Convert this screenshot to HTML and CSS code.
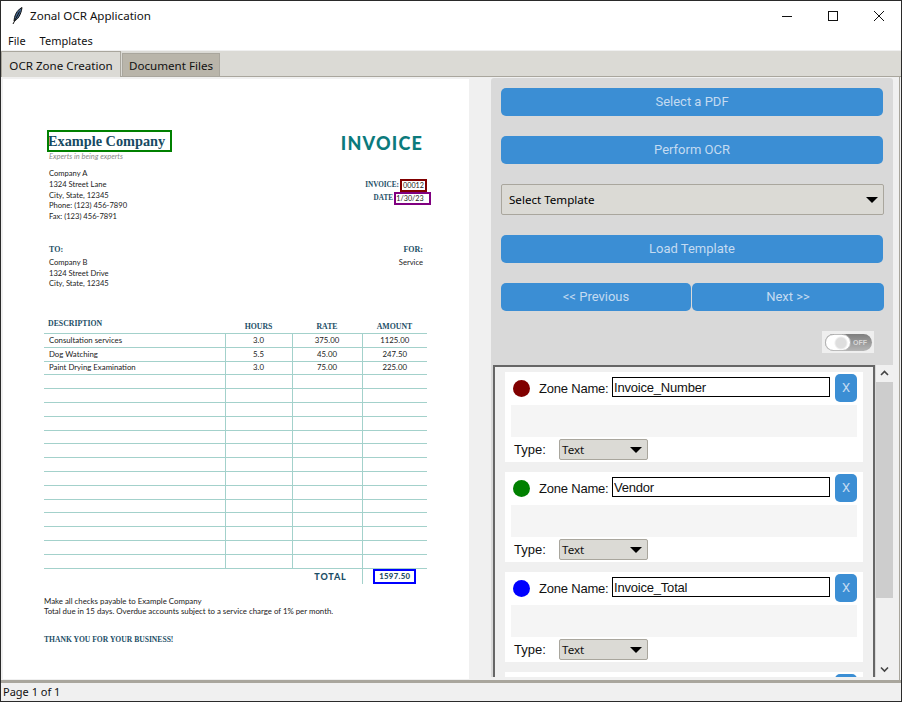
FILE: index.html
```html
<!DOCTYPE html>
<html lang="en">
<head>
    <meta charset="UTF-8">
    <title>Zonal OCR Application</title>
    <link rel="stylesheet" href="styles.css">
</head>
<body>
    <div class="window">
        <div class="titlebar">
            <svg class="app-icon" width="16" height="20" viewBox="0 0 16 20">
                <path d="M13 1.5C9.5 3 6.5 7 5.5 11.5L5 15C8.5 14 12 9 13 1.5Z" fill="#41658f" stroke="#111" stroke-width="1"/>
                <path d="M10.5 5.5L4 18" stroke="#111" stroke-width="1" fill="none"/>
            </svg>
            <span class="title">Zonal OCR Application</span>
            <div class="win-controls">
                <svg width="12" height="12" viewBox="0 0 12 12"><path d="M1 6.5H11" stroke="#111" fill="none"/></svg>
                <svg width="12" height="12" viewBox="0 0 12 12"><rect x="1.5" y="1.5" width="9" height="9" stroke="#111" fill="none"/></svg>
                <svg width="12" height="12" viewBox="0 0 12 12"><path d="M1 1L11 11M11 1L1 11" stroke="#111" fill="none"/></svg>
            </div>
        </div>

        <div class="menubar">
            <span>File</span>
            <span>Templates</span>
        </div>

        <div class="notebook">
            <div class="tabs">
                <div class="tab active">OCR Zone Creation</div>
                <div class="tab">Document Files</div>
            </div>

            <div class="tab-body">
                <div class="doc">
                    <div class="doc-head">
                        <div>
                            <div class="company">Example Company</div>
                            <div class="tagline">Experts in being experts</div>
                        </div>
                        <div class="invoice-word">INVOICE</div>
                    </div>

                    <div class="sender-row">
                        <div class="lines">
                            <div>Company A</div>
                            <div>1324 Street Lane</div>
                            <div>City, State, 12345</div>
                            <div>Phone: (123) 456-7890</div>
                            <div>Fax: (123) 456-7891</div>
                        </div>
                        <div class="meta">
                            <div class="meta-row"><b>INVOICE:</b><span class="meta-no">00012</span></div>
                            <div class="meta-row"><b>DATE</b><span class="meta-date">1/30/23</span></div>
                        </div>
                    </div>

                    <div class="bill-row">
                        <div class="lines">
                            <div class="heading">TO:</div>
                            <div>Company B</div>
                            <div>1324 Street Drive</div>
                            <div>City, State, 12345</div>
                        </div>
                        <div class="lines right">
                            <div class="heading">FOR:</div>
                            <div>Service</div>
                        </div>
                    </div>

                    <table class="items">
                        <tr class="items-head">
                            <th class="desc">DESCRIPTION</th>
                            <th class="col-hours">HOURS</th>
                            <th class="col-rate">RATE</th>
                            <th class="col-amount">AMOUNT</th>
                        </tr>
                        <tr><td>Consultation services</td><td>3.0</td><td>375.00</td><td>1125.00</td></tr>
                        <tr><td>Dog Watching</td><td>5.5</td><td>45.00</td><td>247.50</td></tr>
                        <tr><td>Paint Drying Examination</td><td>3.0</td><td>75.00</td><td>225.00</td></tr>
                        <tr><td></td><td></td><td></td><td></td></tr>
                        <tr><td></td><td></td><td></td><td></td></tr>
                        <tr><td></td><td></td><td></td><td></td></tr>
                        <tr><td></td><td></td><td></td><td></td></tr>
                        <tr><td></td><td></td><td></td><td></td></tr>
                        <tr><td></td><td></td><td></td><td></td></tr>
                        <tr><td></td><td></td><td></td><td></td></tr>
                        <tr><td></td><td></td><td></td><td></td></tr>
                        <tr><td></td><td></td><td></td><td></td></tr>
                        <tr><td></td><td></td><td></td><td></td></tr>
                        <tr><td></td><td></td><td></td><td></td></tr>
                        <tr><td></td><td></td><td></td><td></td></tr>
                        <tr><td></td><td></td><td></td><td></td></tr>
                        <tr><td></td><td></td><td></td><td></td></tr>
                        <tr class="total-row">
                            <td colspan="3">TOTAL</td>
                            <td>1597.50</td>
                        </tr>
                    </table>

                    <div class="notes">
                        <div>Make all checks payable to Example Company</div>
                        <div>Total due in 15 days. Overdue accounts subject to a service charge of 1% per month.</div>
                    </div>
                    <div class="thanks">THANK YOU FOR YOUR BUSINESS!</div>

                    <!-- zones drawn over the page -->
                    <div class="zone zone-vendor"></div>
                    <div class="zone zone-number"></div>
                    <div class="zone zone-date"></div>
                    <div class="zone zone-total"></div>
                </div>

                <div class="side">
                    <div class="controls">
                        <div class="btn">Select a PDF</div>
                        <div class="btn">Perform OCR</div>
                        <div class="combo"><span>Select Template</span><i class="arrow"></i></div>
                        <div class="btn">Load Template</div>
                        <div class="pager">
                            <div class="btn btn-prev">&lt;&lt; Previous</div>
                            <div class="btn btn-next">Next &gt;&gt;</div>
                        </div>
                        <div class="toggle-row">
                            <div class="toggle">
                                <div class="toggle-pill"><span class="toggle-knob"></span><span class="toggle-text">OFF</span></div>
                            </div>
                        </div>
                    </div>

                    <div class="zones-wrap">
                        <div class="zones">
                            <div class="card">
                                <div class="card-top">
                                    <span class="dot dot-red"></span>
                                    <span class="zone-label">Zone Name:</span>
                                    <input class="zone-input" value="Invoice_Number">
                                    <div class="x-btn">X</div>
                                </div>
                                <div class="card-strip"></div>
                                <div class="card-type">
                                    <span class="type-label">Type:</span>
                                    <div class="type-combo"><span>Text</span><i class="arrow"></i></div>
                                </div>
                            </div>
                            <div class="card">
                                <div class="card-top">
                                    <span class="dot dot-green"></span>
                                    <span class="zone-label">Zone Name:</span>
                                    <input class="zone-input" value="Vendor">
                                    <div class="x-btn">X</div>
                                </div>
                                <div class="card-strip"></div>
                                <div class="card-type">
                                    <span class="type-label">Type:</span>
                                    <div class="type-combo"><span>Text</span><i class="arrow"></i></div>
                                </div>
                            </div>
                            <div class="card">
                                <div class="card-top">
                                    <span class="dot dot-blue"></span>
                                    <span class="zone-label">Zone Name:</span>
                                    <input class="zone-input" value="Invoice_Total">
                                    <div class="x-btn">X</div>
                                </div>
                                <div class="card-strip"></div>
                                <div class="card-type">
                                    <span class="type-label">Type:</span>
                                    <div class="type-combo"><span>Text</span><i class="arrow"></i></div>
                                </div>
                            </div>
                            <div class="card">
                                <div class="card-top">
                                    <span class="dot"></span>
                                    <span class="zone-label"></span>
                                    <input class="zone-input">
                                    <div class="x-btn"></div>
                                </div>
                            </div>
                        </div>
                        <div class="scrollbar">
                            <svg class="scroll-arrow" width="17" height="17" viewBox="0 0 17 17"><path d="M5 10L8.5 6.5L12 10" stroke="#444" stroke-width="1.6" fill="none"/></svg>
                            <div class="scroll-thumb"></div>
                            <div class="scroll-rest"></div>
                            <svg class="scroll-arrow" width="17" height="16" viewBox="0 0 17 16"><path d="M5 6.5L8.5 10L12 6.5" stroke="#444" stroke-width="1.6" fill="none"/></svg>
                        </div>
                    </div>
                </div>
            </div>
        </div>

        <div class="statusbar">Page 1 of 1</div>
    </div>
</body>
</html>
```

FILE: styles.css
```css
* {
    box-sizing: border-box;
}

body {
    margin: 0;
    padding: 0;
    background-color: #fff;
    color: #111;
    font-family: "Noto Sans", sans-serif;
    font-size: 11.6px;
}

.window {
    width: 902px;
    height: 702px;
    border: 1px solid #2a2a2a;
    display: flex;
    flex-direction: column;
    overflow: hidden;
}

.titlebar {
    height: 29px;
    flex: none;
    display: flex;
    align-items: center;
    padding-left: 8px;
    background-color: #fff;
}

.app-icon {
    margin-right: 5px;
}

.title {
    flex: 1;
}

.win-controls {
    display: flex;
    gap: 34px;
    padding-right: 16px;
}

.menubar {
    height: 20px;
    flex: none;
    display: flex;
    gap: 14px;
    align-items: center;
    padding-left: 7px;
    background-color: #fff;
    font-size: 11px;
}

.notebook {
    flex: 1;
    min-height: 0;
    display: flex;
    flex-direction: column;
    background-color: #f0f0f0;
}

.tabs {
    height: 27px;
    flex: none;
    display: flex;
    align-items: flex-end;
    padding-left: 1px;
    background-color: #dbdad5;
    border-top: 1px solid #f0f0f0;
    border-bottom: 1px solid #a9a69d;
}

.tab {
    height: 23px;
    width: 98px;
    margin-left: 1px;
    text-align: center;
    line-height: 23px;
    background-color: #b9b5aa;
    border: 1px solid #a9a69d;
    border-bottom: none;
}

.tab.active {
    height: 26px;
    width: 120px;
    margin-left: -1px;
    margin-bottom: -1px;
    line-height: 27px;
    background-color: #dbdad5;
}

.tab-body {
    flex: 1;
    min-height: 0;
    display: flex;
    margin-right: 1px;
    padding: 1px 0 3px 2px;
    border-right: 1px solid #a9a69d;
}

/* invoice page */

.doc {
    position: relative;
    width: 466px;
    flex: none;
    margin: 1px 0 -2px;
    padding: 50px 0 0 41px;
    background-color: #fff;
    color: #222;
    font-family: Lato, sans-serif;
    font-size: 7.6px;
    line-height: 10.8px;
}

.doc-head {
    width: 379px;
    display: flex;
    justify-content: space-between;
    align-items: flex-start;
    padding-left: 5px;
}

.company {
    margin-left: -1px;
    color: #164a63;
    font-family: "Liberation Serif", serif;
    font-size: 14.3px;
    font-weight: bold;
    line-height: 24px;
}

.tagline {
    color: #8a8a8a;
    font-style: italic;
    font-size: 7.5px;
    line-height: 7px;
}

.invoice-word {
    margin-top: 2px;
    color: #0b7a7c;
    font-size: 18px;
    font-weight: 900;
    letter-spacing: 1.2px;
    line-height: 24px;
}

.sender-row {
    width: 386px;
    margin-top: 8px;
    padding-left: 5px;
    display: flex;
    justify-content: space-between;
}

.meta {
    margin-top: 11px;
    font-family: "Liberation Serif", serif;
    color: #1c4e66;
}

.meta-row {
    display: flex;
    justify-content: flex-end;
    height: 13px;
    line-height: 13px;
}

.meta-row b {
    font-size: 7.2px;
}

.meta-no,
.meta-date {
    color: #222;
    font-family: Lato, sans-serif;
    font-size: 7.2px;
    text-align: center;
}

.meta-no {
    margin: 0 3px 0 1px;
    width: 27px;
}

.meta-date {
    width: 37px;
    padding-right: 3px;
}

.bill-row {
    width: 379px;
    margin-top: 23px;
    padding-left: 5px;
    display: flex;
    justify-content: space-between;
}

.lines.right {
    text-align: right;
}

.heading {
    color: #1c4e66;
    font-family: "Liberation Serif", serif;
    font-size: 8px;
    font-weight: bold;
    margin-bottom: 1px;
}

.items {
    width: 383px;
    margin-top: 30px;
    border-collapse: collapse;
    table-layout: fixed;
    font-size: 7.8px;
}

.items td {
    height: 13.8px;
    padding: 0;
    border: 1px solid #a3d1cb;
    text-align: center;
    line-height: 11px;
}

.items tr > td:first-child {
    border-left: none;
    padding-left: 5px;
    text-align: left;
}

.items td:last-child {
    border-right: none;
}

.items th {
    height: 14px;
    padding: 0;
    color: #1c4e66;
    font-family: "Liberation Serif", serif;
    font-size: 7.8px;
    font-weight: bold;
    vertical-align: bottom;
    border-bottom: 1px solid #a3d1cb;
}

.items th.desc {
    width: 181px;
    padding: 0 0 3px 4px;
    text-align: left;
}

.col-hours {
    width: 67px;
}

.col-rate {
    width: 70px;
}

.col-amount {
    width: 65px;
}

.items .total-row td {
    height: 16px;
    border-bottom: none;
    color: #1c4e66;
    font-weight: 900;
    letter-spacing: 0.3px;
}

.items .total-row td:first-child {
    border-left: none;
    padding-right: 15px;
    text-align: right;
    font-size: 9px;
    letter-spacing: 0.8px;
}

.notes {
    margin-top: 12px;
    font-size: 7.85px;
    line-height: 10px;
}

.thanks {
    margin-top: 19px;
    color: #1c4e66;
    font-family: "Liberation Serif", serif;
    font-size: 7.6px;
    font-weight: bold;
}

.zone {
    position: absolute;
    border: 2px solid;
}

.zone-vendor {
    left: 44px;
    top: 51px;
    width: 125px;
    height: 22px;
    border-color: #008000;
}

.zone-number {
    left: 397px;
    top: 100px;
    width: 27px;
    height: 13px;
    border-color: #800000;
}

.zone-date {
    left: 391px;
    top: 113px;
    width: 37px;
    height: 13px;
    border-color: #800080;
}

.zone-total {
    left: 370px;
    top: 490px;
    width: 43px;
    height: 15px;
    border-color: #0000ff;
}

/* right side */

.side {
    flex: none;
    width: 402px;
    margin-left: 22px;
    display: flex;
    flex-direction: column;
    background-color: #d9d9d9;
    border-radius: 3px 3px 0 0;
    overflow: hidden;
}

.controls {
    flex: none;
    padding: 10px 9px 0 10px;
    display: flex;
    flex-direction: column;
}

.btn {
    height: 28px;
    margin: 0 1px 20px 0;
    border-radius: 5px;
    background-color: #3b8ed4;
    color: #c4dbf1;
    font-family: Roboto, sans-serif;
    font-size: 13px;
    line-height: 27px;
    text-align: center;
}

.combo {
    height: 31px;
    margin-bottom: 20px;
    padding: 0 5px 0 7px;
    display: flex;
    align-items: center;
    justify-content: space-between;
    background-color: #dbdad5;
    border: 1px solid #a9a69d;
    border-radius: 2px;
    color: #000;
}

.arrow {
    width: 0;
    height: 0;
    border-left: 6px solid transparent;
    border-right: 6px solid transparent;
    border-top: 6px solid #000;
}

.pager {
    display: flex;
    gap: 1px;
}

.pager .btn {
    margin: 0;
}

.btn-prev {
    width: 190px;
    flex: none;
}

.btn-next {
    flex: 1;
}

.toggle-row {
    height: 54px;
    display: flex;
    justify-content: flex-end;
    align-items: flex-start;
    padding: 20px 10px 0 0;
}

.toggle {
    width: 52px;
    height: 22px;
    padding: 3px 2px 2px 3px;
    background-color: #efefef;
}

.toggle-pill {
    position: relative;
    height: 17px;
    border-radius: 9px;
    background: linear-gradient(#7f7f7f, #b5b5b5);
}

.toggle-knob {
    position: absolute;
    left: 0;
    top: 0;
    width: 26px;
    height: 17px;
    border-radius: 9px;
    background: radial-gradient(circle at 15px 8px, #dedede 5px, #fff 7px);
    border: 1px solid #bbb;
}

.toggle-text {
    position: absolute;
    right: 5px;
    top: 0;
    color: #d8d8d8;
    font-family: "Liberation Sans", sans-serif;
    font-size: 7px;
    font-weight: bold;
    line-height: 17px;
}

.zones-wrap {
    flex: 1;
    min-height: 0;
    display: flex;
    padding-left: 2px;
    background-color: #d9d9d9;
}

.zones {
    width: 382px;
    flex: none;
    padding: 5px 10px 0;
    display: flex;
    flex-direction: column;
    gap: 10px;
    overflow: hidden;
    background-color: #f0f0f0;
    border: 2px solid #666;
    border-bottom: none;
}

.card {
    flex: none;
    height: 90px;
    padding: 2px 6px 0;
    background-color: #fff;
}

.card-top {
    height: 28px;
    display: flex;
    align-items: center;
}

.dot {
    width: 17px;
    height: 17px;
    margin-left: 2px;
    border-radius: 50%;
}

.dot-red {
    background-color: #800000;
}

.dot-green {
    background-color: #008000;
}

.dot-blue {
    background-color: #0000ff;
}

.zone-label {
    width: 73px;
    margin-left: 9px;
    color: #111;
    font-family: "Liberation Sans", sans-serif;
    font-size: 13px;
    letter-spacing: -0.2px;
    white-space: nowrap;
}

.zone-input {
    width: 218px;
    height: 20px;
    margin: -2px 0 0 0;
    padding: 0 1px;
    border: 1px solid #000;
    border-radius: 0;
    outline: none;
    color: #111;
    font-family: "Liberation Sans", sans-serif;
    font-size: 13px;
    letter-spacing: -0.2px;
}

.x-btn {
    width: 22px;
    height: 28px;
    margin-left: 5px;
    border-radius: 5px;
    background-color: #3b8ed4;
    color: #c4dbf1;
    font-family: Roboto, sans-serif;
    font-size: 13px;
    line-height: 28px;
    text-align: center;
}

.card-strip {
    height: 32px;
    margin-top: 3px;
    background-color: #f5f5f5;
}

.card-type {
    display: flex;
    align-items: center;
    margin-top: 2px;
    padding-left: 3px;
}

.type-label {
    width: 45px;
    font-family: "Liberation Sans", sans-serif;
    font-size: 13px;
}

.type-combo {
    width: 89px;
    height: 21px;
    padding: 0 5px 0 2px;
    display: flex;
    align-items: center;
    justify-content: space-between;
    background-color: #dbdad5;
    border: 1px solid #a9a69d;
    border-radius: 2px;
    color: #111;
}

.scrollbar {
    width: 17px;
    margin-left: 1px;
    display: flex;
    flex-direction: column;
    background-color: #f0f0f0;
}

.scroll-arrow {
    flex: none;
}

.scroll-thumb {
    height: 216px;
    flex: none;
    background-color: #cdcdcd;
}

.scroll-rest {
    flex: 1;
}

.statusbar {
    flex: none;
    height: 21px;
    padding-left: 2px;
    border-top: 3px solid #a9a69d;
    background-color: #f0f0f0;
    font-size: 11px;
    line-height: 17px;
}
```
